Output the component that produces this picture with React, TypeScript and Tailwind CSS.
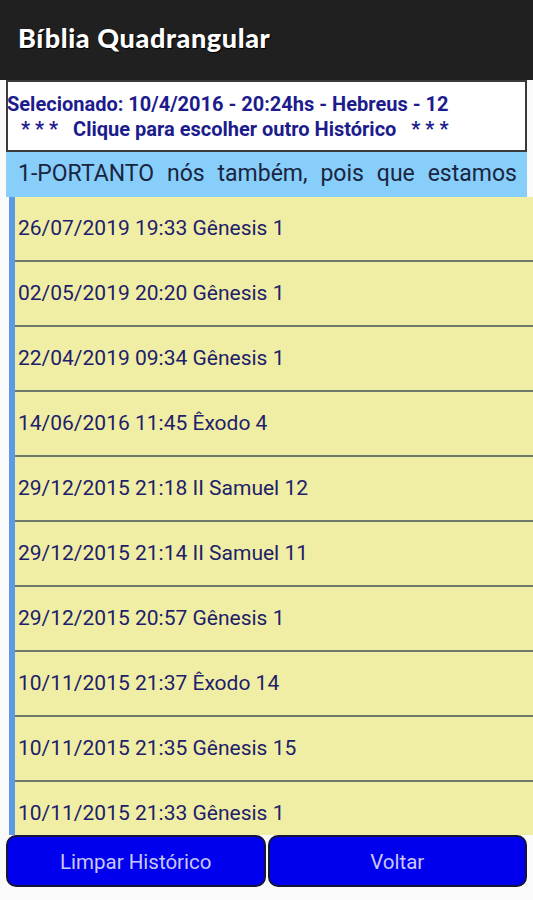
import React from "react";

const rows = [
  "26/07/2019 19:33 Gênesis 1",
  "02/05/2019 20:20 Gênesis 1",
  "22/04/2019 09:34 Gênesis 1",
  "14/06/2016 11:45 Êxodo 4",
  "29/12/2015 21:18 II Samuel 12",
  "29/12/2015 21:14 II Samuel 11",
  "29/12/2015 20:57 Gênesis 1",
  "10/11/2015 21:37 Êxodo 14",
  "10/11/2015 21:35 Gênesis 15",
  "10/11/2015 21:33 Gênesis 1",
];

export default function App() {
  return (
    <div className="w-[533px] h-[900px] flex flex-col bg-[#fafafa] overflow-hidden" style={{ fontFamily: "Roboto, 'Liberation Sans', sans-serif" }}>
      <div className="h-[80px] shrink-0 bg-[#202020] flex items-center px-[18px] pb-[3px]">
        <span className="text-white text-[27px] font-black tracking-[0.6px]" style={{ fontFamily: "Lato, 'Noto Sans', sans-serif", textShadow: "1px 1px 1px #000" }}>
          Bíblia Quadrangular
        </span>
      </div>
      <div className="ml-[6px] mr-[6px] h-[72px] shrink-0 border-2 border-[#3a3a3a] bg-white flex flex-col justify-center text-[#1c1c8c] font-bold text-[20px] leading-[25px] pt-[1px]">
        <div className="-ml-[1px] whitespace-nowrap">Selecionado: 10/4/2016 - 20:24hs - Hebreus - 12</div>
        <div className="pl-[13px] whitespace-pre">{"* * *   Clique para escolher outro Histórico   * * *"}</div>
      </div>
      <div className="ml-[6px] mr-[6px] h-[45px] shrink-0 bg-[#87cefa] flex items-center pl-[12px] pr-[10px]">
        <div className="w-full text-[23px] text-[#1a2540] flex justify-between whitespace-nowrap">
          {"1-PORTANTO nós também, pois que estamos".split(" ").map((w, i) => (
            <span key={i}>{w}</span>
          ))}
        </div>
      </div>
      <div className="flex-1 min-h-0 ml-[9px] border-l-[6px] border-[#5b9be6] bg-[#f0eea4] overflow-hidden">
        {rows.map((r, i) => (
          <div key={i} className="h-[65px] border-b-2 border-[#6e7a68] flex items-center pl-[3px] text-[21px] text-[#20206a] whitespace-nowrap">
            {r}
          </div>
        ))}
      </div>
      <div className="h-[52px] shrink-0 flex gap-[2px] px-[6px] mb-[13px]">
        <button className="flex-1 rounded-[10px] border-2 border-[#15153a] bg-[#0000ee] text-[#c9c9f5] text-[20.5px] pt-[3px]">
          Limpar Histórico
        </button>
        <button className="flex-1 rounded-[10px] border-2 border-[#15153a] bg-[#0000ee] text-[#c9c9f5] text-[20.5px] pt-[3px]">
          Voltar
        </button>
      </div>
    </div>
  );
}
